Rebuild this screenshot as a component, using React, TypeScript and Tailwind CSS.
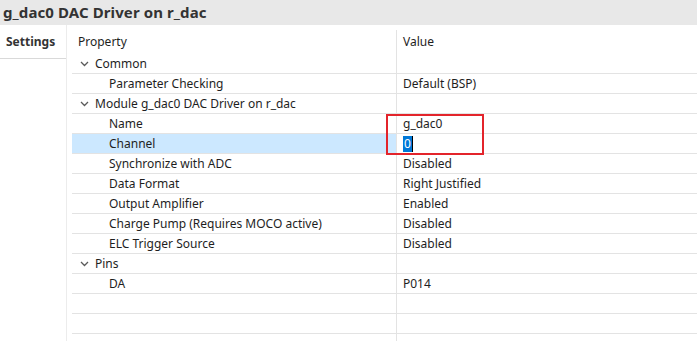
import React from "react";

type Row = {
  label: string;
  value?: string;
  group?: boolean;
  selected?: boolean;
  editing?: boolean;
};

const rows: Row[] = [
  { label: "Common", group: true },
  { label: "Parameter Checking", value: "Default (BSP)" },
  { label: "Module g_dac0 DAC Driver on r_dac", group: true },
  { label: "Name", value: "g_dac0" },
  { label: "Channel", selected: true, editing: true },
  { label: "Synchronize with ADC", value: "Disabled" },
  { label: "Data Format", value: "Right Justified" },
  { label: "Output Amplifier", value: "Enabled" },
  { label: "Charge Pump (Requires MOCO active)", value: "Disabled" },
  { label: "ELC Trigger Source", value: "Disabled" },
  { label: "Pins", group: true },
  { label: "DA", value: "P014" },
  { label: "" },
  { label: "" },
  { label: "" },
];

function Chevron() {
  return (
    <svg width="9" height="6" viewBox="0 0 9 6" className="shrink-0">
      <polyline points="1,1 4.5,4.5 8,1" fill="none" stroke="#5a5a5a" strokeWidth="1.3" />
    </svg>
  );
}

export default function App() {
  return (
    <div
      className="w-[697px] h-[341px] overflow-hidden bg-white text-[#1e1e1e] flex flex-col"
      style={{ fontFamily: '"Noto Sans", "Open Sans", sans-serif' }}
    >
      {/* Title bar */}
      <div className="h-[25px] shrink-0 bg-[#e8e8e8] flex items-center pl-[3px]">
        <span className="text-[15px] font-bold text-[#333] leading-none tracking-[0.1px]">
          g_dac0 DAC Driver on r_dac
        </span>
      </div>

      <div className="flex flex-1 min-h-0">
        {/* Tabs column */}
        <div className="w-[67px] shrink-0 flex flex-col border-r border-[#ececec]">
          <div className="h-[34px] bg-white border-b border-[#d9d9d9] flex items-center pl-[6px]">
            <span className="text-[12px] font-bold text-[#333]">Settings</span>
          </div>
        </div>

        {/* Property table */}
        <div className="relative flex-1 pl-[5px] pt-[5px]">
          <div className="flex h-6 items-center">
            <div className="w-[325px] h-full border-r border-[#e3e3e3] flex items-center pl-[6px] text-[12px]">
              Property
            </div>
            <div className="flex-1 pl-[6px] text-[12px]">Value</div>
          </div>

          {rows.map((r, i) => (
            <div
              key={i}
              className={
                "flex h-5 border-b border-[#e3e3e3] text-[12px] leading-none " +
                (r.selected ? "bg-[#cce8ff]" : "")
              }
            >
              <div
                className={
                  "w-[325px] shrink-0 h-full border-r border-[#e3e3e3] flex items-center " +
                  (r.group ? "pl-[8px] gap-[6px]" : "pl-[37px]")
                }
              >
                {r.group && <Chevron />}
                <span>{r.label}</span>
              </div>
              <div className="flex-1 h-full flex items-center pl-[6px] bg-white">
                {r.editing ? (
                  <span className="flex items-center">
                    <span className="bg-[#0078d7] text-white h-[16px] px-[1px] flex items-center">0</span>
                    <span className="w-px h-[16px] bg-black" />
                  </span>
                ) : (
                  <span>{r.value}</span>
                )}
              </div>
            </div>
          ))}

          {/* Red annotation box */}
          <div className="absolute left-[319px] top-[89px] w-[98px] h-[41px] border-2 border-[#e3242b] pointer-events-none" />
        </div>
      </div>
    </div>
  );
}
